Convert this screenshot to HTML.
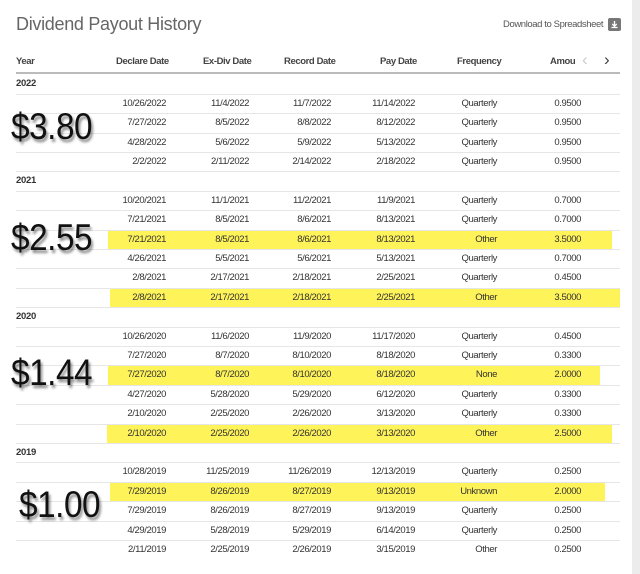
<!DOCTYPE html>
<html><head><style>
body{margin:0;width:640px;height:574px;background:#fff;position:relative;overflow:hidden;font-family:"Liberation Sans",sans-serif;color:#333}
.strip{position:absolute;left:632px;top:0;width:8px;height:574px;background:#ececec}
.title{position:absolute;left:16px;top:14px;font-size:18px;color:#666;letter-spacing:-0.3px}
.dl{position:absolute;left:503px;top:19px;font-size:9.5px;color:#555;letter-spacing:-0.4px}
.ico{position:absolute;left:608px;top:18px;width:13px;height:13px;background:#777;border-radius:2px}
.hdr{position:absolute;top:56px;height:12px;font-size:9.5px;font-weight:bold;color:#444;letter-spacing:-0.4px}
.hl{position:absolute;left:16px;top:72px;width:604px;height:2px;background:#bbb}
.row{position:absolute;left:16px;width:604px;height:19.4px;border-top:1px solid #e6e6e6;box-sizing:border-box}
.c{position:absolute;font-size:9.5px;letter-spacing:-0.4px;text-align:right;line-height:19px;top:0}
.yr{position:absolute;left:16px;font-size:9.5px;font-weight:bold;line-height:19px;letter-spacing:-0.3px}
.y{position:absolute;background:#fff35a}
.big{position:absolute;font-size:37px;color:#111;text-shadow:2px 3px 3px rgba(0,0,0,.45);transform:scaleX(0.9);transform-origin:left top;letter-spacing:-0.5px}
</style></head><body>
<div class="strip"></div>
<div class="title">Dividend Payout History</div>
<div class="dl">Download to Spreadsheet</div>
<div class="ico"><svg width="13" height="13" viewBox="0 0 13 13"><path d="M6.5 3v5M4.3 6l2.2 2.3L8.7 6M3.5 9.5h6" stroke="#fff" stroke-width="1.3" fill="none"/></svg></div>
<div class="hdr" style="left:16px">Year</div>
<div class="hdr" style="left:116px">Declare Date</div>
<div class="hdr" style="left:203px">Ex-Div Date</div>
<div class="hdr" style="left:284px">Record Date</div>
<div class="hdr" style="left:380px">Pay Date</div>
<div class="hdr" style="left:457px">Frequency</div>
<div class="hdr" style="left:550px">Amou</div>
<div class="hdr" style="left:582px;top:50px;font-size:17px;color:#ccc;font-weight:normal">&#8249;</div>
<div class="hdr" style="left:604px;top:50px;font-size:17px;color:#444;font-weight:normal">&#8250;</div>
<div class="hl"></div>
<div id="t"></div>
<div class="big" style="left:11px;top:106px">$3.80</div>
<div class="big" style="left:11px;top:217px">$2.55</div>
<div class="big" style="left:11px;top:352px">$1.44</div>
<div class="big" style="left:19px;top:484px">$1.00</div>
<script>
var rows=[
["2022"],["10/26/2022","11/4/2022","11/7/2022","11/14/2022","Quarterly","0.9500"],["7/27/2022","8/5/2022","8/8/2022","8/12/2022","Quarterly","0.9500"],["4/28/2022","5/6/2022","5/9/2022","5/13/2022","Quarterly","0.9500"],["2/2/2022","2/11/2022","2/14/2022","2/18/2022","Quarterly","0.9500"],
["2021"],["10/20/2021","11/1/2021","11/2/2021","11/9/2021","Quarterly","0.7000"],["7/21/2021","8/5/2021","8/6/2021","8/13/2021","Quarterly","0.7000"],["7/21/2021","8/5/2021","8/6/2021","8/13/2021","Other","3.5000",108,612],["4/26/2021","5/5/2021","5/6/2021","5/13/2021","Quarterly","0.7000"],["2/8/2021","2/17/2021","2/18/2021","2/25/2021","Quarterly","0.4500"],["2/8/2021","2/17/2021","2/18/2021","2/25/2021","Other","3.5000",110,620],
["2020"],["10/26/2020","11/6/2020","11/9/2020","11/17/2020","Quarterly","0.4500"],["7/27/2020","8/7/2020","8/10/2020","8/18/2020","Quarterly","0.3300"],["7/27/2020","8/7/2020","8/10/2020","8/18/2020","None","2.0000",108,600],["4/27/2020","5/28/2020","5/29/2020","6/12/2020","Quarterly","0.3300"],["2/10/2020","2/25/2020","2/26/2020","3/13/2020","Quarterly","0.3300"],["2/10/2020","2/25/2020","2/26/2020","3/13/2020","Other","2.5000",107,612],
["2019"],["10/28/2019","11/25/2019","11/26/2019","12/13/2019","Quarterly","0.2500"],["7/29/2019","8/26/2019","8/27/2019","9/13/2019","Unknown","2.0000",110,605],["7/29/2019","8/26/2019","8/27/2019","9/13/2019","Quarterly","0.2500"],["4/29/2019","5/28/2019","5/29/2019","6/14/2019","Quarterly","0.2500"],["2/11/2019","2/25/2019","2/26/2019","3/15/2019","Other","0.2500"]];
var R=[166,249,331,415,497,581],h="";
rows.forEach(function(r,k){var top=74.3+19.4*k;
if(r.length>6)h+='<div class="y" style="left:'+r[6]+'px;width:'+(r[7]-r[6])+'px;top:'+(top+1)+'px;height:18.4px"></div>';
if(k>0)h+='<div class="row" style="top:'+top+'px"></div>';
if(r.length==1){h+='<div class="yr" style="top:'+top+'px">'+r[0]+'</div>';return;}
for(var i=0;i<6;i++)h+='<div class="c" style="right:'+(640-R[i])+'px;top:'+top+'px">'+r[i]+'</div>';});
document.getElementById('t').innerHTML=h;
</script>
</body></html>
